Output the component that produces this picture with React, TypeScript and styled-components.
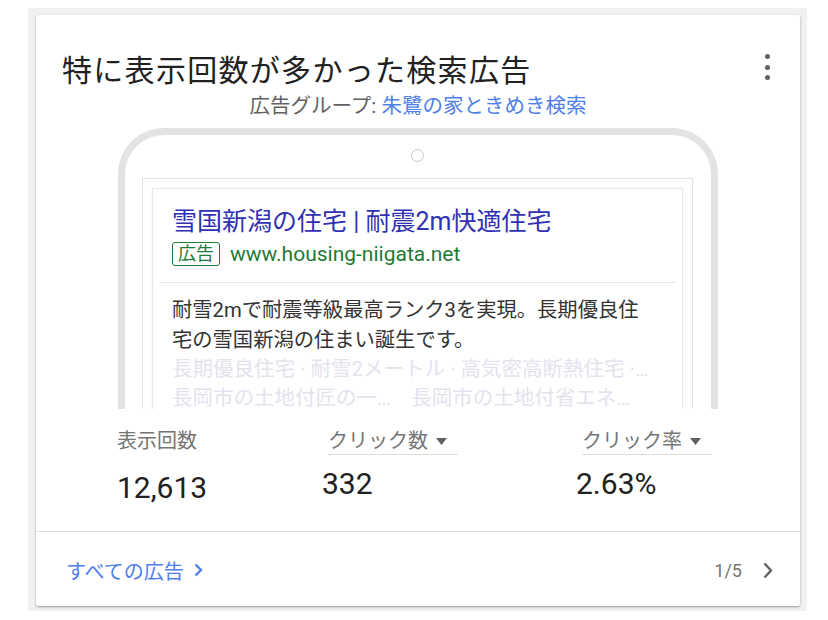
import React from "react";
import styled, { createGlobalStyle } from "styled-components";

const Global = createGlobalStyle`
  html, body { margin: 0; padding: 0; background: #ffffff; }
  body { font-family: "Roboto", "Noto Sans CJK JP", sans-serif; }
  * { box-sizing: border-box; }
`;

const Frame = styled.div`
  margin: 8px 21px 0 28px;
  background: #f1f1f1;
  padding: 7px 7px 5px 8px;
`;

const Card = styled.div`
  position: relative;
  background: #fff;
  border-radius: 2px;
  box-shadow: 0 1px 3px rgba(0, 0, 0, 0.28), 0 1px 1px rgba(0, 0, 0, 0.1);
  padding-top: 38px;
`;

const Title = styled.h1`
  margin: 0 0 0 26px;
  font-family: "Roboto", "Noto Sans CJK JP", sans-serif;
  font-weight: 400;
  font-size: 30px;
  line-height: 36px;
  letter-spacing: 1.3px;
  color: #212121;
`;

const Kebab = styled.button`
  position: absolute;
  top: 39px;
  right: 28px;
  width: 10px;
  height: 26px;
  padding: 0;
  border: none;
  background: none;
  display: flex;
  flex-direction: column;
  align-items: center;
  justify-content: space-between;
  span {
    width: 5px;
    height: 5px;
    border-radius: 50%;
    background: #616161;
  }
`;

const Subtitle = styled.div`
  margin-top: 5px;
  text-align: center;
  font-size: 20.5px;
  line-height: 24px;
  color: #616161;
  a {
    color: #4f80e8;
    text-decoration: none;
  }
`;

const PhoneClip = styled.div`
  margin: 10px auto 0;
  width: 600px;
  height: 281px;
  overflow: hidden;
`;

const Phone = styled.div`
  border: 7px solid #e3e3e3;
  border-bottom: none;
  border-radius: 46px 46px 0 0;
  height: 320px;
  padding: 14px 18px 0 17px;
  display: flex;
  flex-direction: column;
  align-items: center;
`;

const Camera = styled.div`
  width: 13px;
  height: 13px;
  border-radius: 50%;
  border: 1px solid #c8c8c8;
  margin-bottom: 16px;
`;

const Screen = styled.div`
  align-self: stretch;
  border: 1px solid #e2e2e2;
  border-bottom: none;
  padding: 9px 9px 0;
  flex: 1;
`;

const AdCard = styled.div`
  border: 1px solid #e6e6e6;
  box-shadow: 0 0 2px rgba(0, 0, 0, 0.06);
  padding: 18px 0 0;
  height: 260px;
`;

const AdTitle = styled.div`
  padding-left: 19px;
  font-size: 25px;
  line-height: 30px;
  color: #3030b2;
`;

const UrlRow = styled.div`
  margin-top: 4px;
  padding-left: 19px;
  display: flex;
  align-items: center;
  gap: 10px;
  height: 26px;
`;

const AdBadge = styled.span`
  border: 1px solid #217a37;
  border-radius: 3px;
  color: #217a37;
  font-size: 18px;
  line-height: 22px;
  padding: 0 5px;
`;

const Url = styled.span`
  color: #1f7a35;
  font-size: 21px;
  line-height: 26px;
`;

const AdDivider = styled.div`
  margin: 15px 6px 0;
  height: 1px;
  background: #e6e6e6;
`;

const Desc = styled.div`
  margin-top: 12px;
  padding-left: 19px;
  font-size: 20.3px;
  line-height: 30px;
  color: #333;
`;

const Faded = styled.div`
  padding-left: 19px;
  font-size: 20.5px;
  line-height: 29px;
  color: #e3e3ee;
  white-space: nowrap;
`;

const Stats = styled.div`
  display: grid;
  grid-template-columns: 205px 254px auto;
  padding: 20px 0 29px 81px;
  border-bottom: 1px solid #e0e0e0;
`;

const Stat = styled.div`
  display: flex;
  flex-direction: column;
  align-items: flex-start;
`;

const Label = styled.div<{ $dropdown?: boolean }>`
  font-size: 20px;
  line-height: 24px;
  color: #757575;
  display: flex;
  align-items: center;
  gap: 8px;
  margin-left: ${(p) => (p.$dropdown ? 6 : 0)}px;
  padding-right: ${(p) => (p.$dropdown ? 11 : 0)}px;
  border-bottom: 1px solid ${(p) => (p.$dropdown ? "#dcdcdc" : "transparent")};
  padding-bottom: 1px;
  svg { display: block; }
`;

const Value = styled.div<{ $shift?: number }>`
  margin-top: ${(p) => 11 + (p.$shift ?? 0)}px;
  font-size: 30px;
  line-height: 36px;
  color: #212121;
  margin-bottom: ${(p) => -(p.$shift ?? 0)}px;
`;

const Footer = styled.div`
  height: 74px;
  display: flex;
  align-items: center;
  justify-content: space-between;
  padding: 2px 27px 0 30px;
`;

const AllAds = styled.a`
  color: #4f80e8;
  font-size: 20px;
  text-decoration: none;
  display: flex;
  align-items: center;
  gap: 10px;
`;

const Pager = styled.div`
  display: flex;
  align-items: center;
  gap: 21px;
  color: #757575;
  font-size: 18px;
`;

const Caret = () => (
  <svg width="11" height="7" viewBox="0 0 11 7">
    <path d="M0 0h11L5.5 7z" fill="#616161" />
  </svg>
);

export default function App() {
  return (
    <>
      <Global />
      <Frame>
        <Card>
          <Title>特に表示回数が多かった検索広告</Title>
          <Kebab aria-label="menu">
            <span />
            <span />
            <span />
          </Kebab>
          <Subtitle>
            広告グループ: <a href="#">朱鷺の家ときめき検索</a>
          </Subtitle>
          <PhoneClip>
            <Phone>
              <Camera />
              <Screen>
                <AdCard>
                  <AdTitle>雪国新潟の住宅 | 耐震2m快適住宅</AdTitle>
                  <UrlRow>
                    <AdBadge>広告</AdBadge>
                    <Url>www.housing-niigata.net</Url>
                  </UrlRow>
                  <AdDivider />
                  <Desc>
                    耐雪2mで耐震等級最高ランク3を実現。長期優良住
                    <br />
                    宅の雪国新潟の住まい誕生です。
                  </Desc>
                  <Faded>長期優良住宅 · 耐雪2メートル · 高気密高断熱住宅 ·…</Faded>
                  <Faded>長岡市の土地付匠の一…　長岡市の土地付省エネ…</Faded>
                </AdCard>
              </Screen>
            </Phone>
          </PhoneClip>
          <Stats>
            <Stat>
              <Label>表示回数</Label>
              <Value $shift={4}>12,613</Value>
            </Stat>
            <Stat>
              <Label $dropdown>
                クリック数 <Caret />
              </Label>
              <Value>332</Value>
            </Stat>
            <Stat>
              <Label $dropdown>
                クリック率 <Caret />
              </Label>
              <Value>2.63%</Value>
            </Stat>
          </Stats>
          <Footer>
            <AllAds href="#">
              すべての広告
              <svg width="9" height="14" viewBox="0 0 9 14">
                <path d="M1.5 1.5L7 7l-5.5 5.5" stroke="#4f80e8" strokeWidth="2.4" fill="none" />
              </svg>
            </AllAds>
            <Pager>
              1/5
              <svg width="10" height="17" viewBox="0 0 10 17">
                <path d="M1.5 1.5L8 8.5l-6.5 7" stroke="#616161" strokeWidth="2.4" fill="none" />
              </svg>
            </Pager>
          </Footer>
        </Card>
      </Frame>
    </>
  );
}
